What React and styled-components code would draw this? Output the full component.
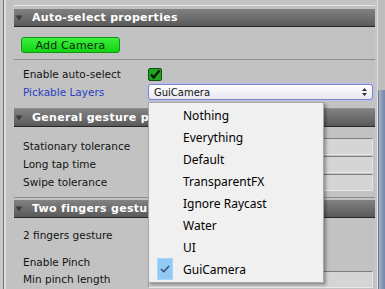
import React from "react";
import styled, { createGlobalStyle } from "styled-components";

const Global = createGlobalStyle`
  html, body { margin: 0; padding: 0; background: #c2c2c2; overflow: hidden; }
  #root { width: 385px; height: 289px; }
`;

const Frame = styled.div`
  position: relative;
  display: flex;
  width: 385px;
  height: 289px;
  background: #c2c2c2;
  font-family: "DejaVu Sans", Verdana, sans-serif;
  font-size: 10.5px;
  color: #111;
  overflow: hidden;
`;

const LeftGutter = styled.div`
  width: 14px;
  flex: none;
  background: linear-gradient(to right, #c9c9c9 0 3px, #717171 3px 4px, #dcdcdc 4px 6px, #c2c2c2 6px);
`;

const Main = styled.div`
  flex: 1;
  display: flex;
  flex-direction: column;
  min-width: 0;
`;

const RightGutter = styled.div`
  width: 10px;
  flex: none;
  display: flex;
  flex-direction: column;
  background: linear-gradient(to right, #c6c6c6 0 2px, #dedede 2px 3px, #bdbdbd 3px);
`;

const Thumb = styled.div`
  margin-top: 90px;
  margin-left: 3px;
  flex: 1;
  background: linear-gradient(to right, #a9b3c8, #8593b0 60%, #7787a8);
  border-left: 1px solid #6c7a98;
`;

const TopStrip = styled.div`
  height: 9px;
  flex: none;
  background: linear-gradient(#c4c4c4 0 5px, #e8e8e8 5px 6px, #c2c2c2 6px);
`;

const Header = styled.div`
  height: 17px;
  flex: none;
  display: flex;
  align-items: center;
  gap: 9px;
  padding-left: 1px;
  background: linear-gradient(#828282, #5a5a5a);
  border-bottom: 1px solid #262626;
  color: #fff;
  font-weight: bold;
  font-size: 11px;
  letter-spacing: 0.3px;
  white-space: nowrap;
  overflow: hidden;
`;

const Body = styled.div`
  display: flex;
  flex-direction: column;
  padding: ${(p) => p.$pad || "0"};
`;

const Button = styled.div`
  width: 97px;
  height: 14px;
  margin-left: 7px;
  border: 1px solid #129412;
  border-radius: 3px;
  background: linear-gradient(#3cf03c, #14d214);
  color: #0c2a0c;
  display: flex;
  align-items: center;
  justify-content: center;
  font-size: 11px;
  letter-spacing: 0.2px;
`;

const Separator = styled.div`
  height: 1px;
  background: #8e8e8e;
  margin: ${(p) => p.$m || "0"};
`;

const Row = styled.div`
  display: flex;
  align-items: center;
  height: ${(p) => p.$h || 16}px;
  margin-top: ${(p) => p.$mt || 0}px;
  padding-left: 9px;
  padding-right: 2px;
`;

const Label = styled.div`
  width: 125px;
  flex: none;
  white-space: nowrap;
  color: ${(p) => (p.$blue ? "#2b3fc4" : "#141414")};
`;

const Dropdown = styled.div`
  flex: 1;
  height: 14px;
  border: 1px solid #7c86cc;
  border-radius: 3px;
  background: linear-gradient(#ffffff, #e6e7f0);
  display: flex;
  align-items: center;
  justify-content: space-between;
  padding: 0 5px 0 5px;
  font-size: 10px;
  color: #111;
  box-shadow: 0 0 0 1px #b9bfe6;
`;

const Field = styled.div`
  flex: 1;
  height: 15px;
  background: #d5d5d5;
  border-top: 1px solid #7e7e7e;
  border-left: 1px solid #9a9a9a;
  border-right: 1px solid #e2e2e2;
  border-bottom: 1px solid #e8e8e8;
`;

const Menu = styled.div`
  position: absolute;
  left: 148px;
  top: 102px;
  width: 174px;
  padding: 1px 0 2px;
  background: #f0f0f0;
  border: 1px solid #a7a7a7;
  box-shadow: 2px 2px 3px rgba(0, 0, 0, 0.35);
  font-family: "Noto Sans", "Segoe UI", sans-serif;
  font-size: 12px;
  color: #000;
`;

const Item = styled.div`
  height: 22px;
  display: flex;
  align-items: center;
  padding-left: 8px;
`;

const CheckSlot = styled.div`
  width: 16px;
  height: 22px;
  margin-right: 10px;
  box-sizing: border-box;
  display: flex;
  align-items: center;
  justify-content: center;
  background: ${(p) => (p.$on ? "#91c9f7" : "transparent")};
  border: ${(p) => (p.$on ? "1px solid #a9d5f8" : "none")};
`;

const Tri = () => (
  <svg width="8" height="6" viewBox="0 0 8 6">
    <path d="M0.5 0.5 L7.5 0.5 L4 5.5 Z" fill="#3a3a3a" />
  </svg>
);

const Check = () => (
  <svg width="14" height="13" viewBox="0 0 14 13">
    <rect x="0.5" y="0.5" width="13" height="12" rx="1.5" fill="#1fa51f" stroke="#0d4f0d" />
    <path d="M3 6.5 L5.6 9.5 L11.5 2.5" stroke="#0a1a0a" strokeWidth="2.2" fill="none" />
  </svg>
);

const Arrows = () => (
  <svg width="5" height="8" viewBox="0 0 5 8">
    <path d="M2.5 0 L5 3 L0 3 Z M2.5 8 L5 5 L0 5 Z" fill="#333" />
  </svg>
);

const MenuTick = () => (
  <svg width="10" height="8" viewBox="0 0 10 8">
    <path d="M1 4 L3.8 6.8 L9 1" stroke="#2f4a66" strokeWidth="1.4" fill="none" />
  </svg>
);

const layers = ["Nothing", "Everything", "Default", "TransparentFX", "Ignore Raycast", "Water", "UI", "GuiCamera"];

export default function App() {
  return (
    <Frame>
      <Global />
      <LeftGutter />
      <Main>
        <TopStrip />
        <Header>
          <Tri />
          <span>Auto-select properties</span>
        </Header>
        <Body $pad="10px 0 0">
          <Button>Add Camera</Button>
          <Separator $m="6px 0 0" />
          <Row $mt={6} $h={16}>
            <Label>Enable auto-select</Label>
            <Check />
          </Row>
          <Row $mt={2} $h={16}>
            <Label $blue>Pickable Layers</Label>
            <Dropdown>
              <span>GuiCamera</span>
              <Arrows />
            </Dropdown>
          </Row>
        </Body>
        <Separator $m="8px 0 0" />
        <Header>
          <Tri />
          <span>General gesture properties</span>
        </Header>
        <Body $pad="10px 0 0">
          <Row $h={18}>
            <Label>Stationary tolerance</Label>
            <Field />
          </Row>
          <Row $h={18}>
            <Label>Long tap time</Label>
            <Field />
          </Row>
          <Row $h={18}>
            <Label>Swipe tolerance</Label>
            <Field />
          </Row>
        </Body>
        <Separator $m="6px 0 2px" />
        <Header>
          <Tri />
          <span>Two fingers gesture properties</span>
        </Header>
        <Body $pad="9px 0 0">
          <Row $h={16}>
            <Label>2 fingers gesture</Label>
          </Row>
          <Row $mt={11} $h={16}>
            <Label>Enable Pinch</Label>
          </Row>
          <Row $mt={1} $h={16}>
            <Label>Min pinch length</Label>
            <Field />
          </Row>
        </Body>
      </Main>
      <RightGutter>
        <Thumb />
      </RightGutter>
      <Menu>
        {layers.map((l) => (
          <Item key={l}>
            <CheckSlot $on={l === "GuiCamera"}>{l === "GuiCamera" && <MenuTick />}</CheckSlot>
            <span>{l}</span>
          </Item>
        ))}
      </Menu>
    </Frame>
  );
}
